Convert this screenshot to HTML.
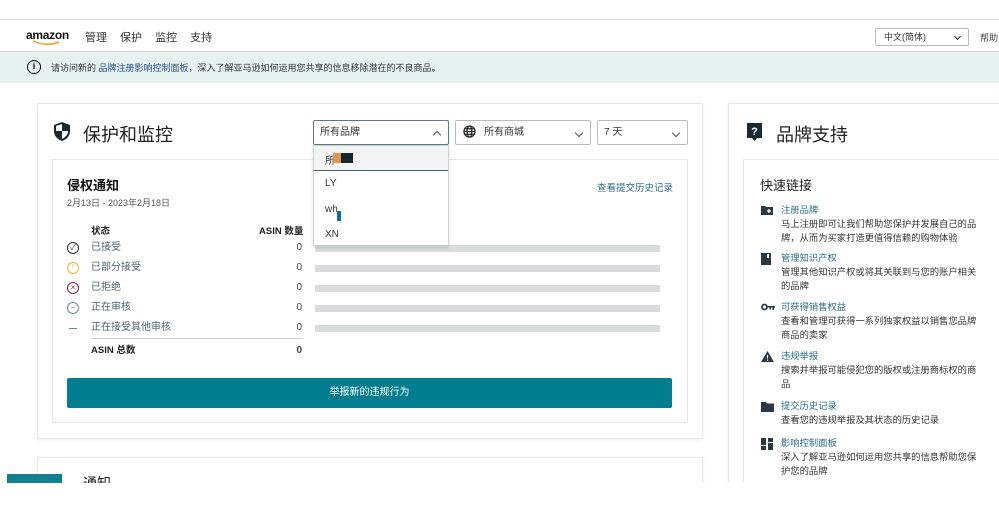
<!DOCTYPE html>
<html><head><meta charset="utf-8"><style>
*{margin:0;padding:0;box-sizing:border-box}
body{width:999px;height:500px;overflow:hidden;background:#fff;font-family:"Liberation Sans","Noto Sans CJK SC",sans-serif;color:#333;position:relative}
.a{position:absolute}
.card{position:absolute;background:#fff;border:1px solid #e7e9e9;box-shadow:0 1px 3px rgba(0,0,0,.08)}
.sel{position:absolute;height:25px;border:1px solid #b9bdbd;border-radius:2px;background:#fff;font-size:10px;color:#333;line-height:23px;padding-left:6px}
.chev{position:absolute;right:8px;top:9px;width:6px;height:6px;border-right:1.3px solid #555;border-bottom:1.3px solid #555;transform:rotate(45deg)}
.bar{position:absolute;left:315px;width:345px;height:7px;background:#d9dcdc}
.st{position:absolute;left:91px;font-size:10px;line-height:12px;color:#4a6470}
.num{position:absolute;left:290px;width:12px;text-align:right;font-size:10px;line-height:12px;color:#444}
.ic{position:absolute;left:67px;width:12px;height:12px;border-radius:50%;border:1.3px solid #333;font-size:8px;line-height:9px;text-align:center}
.ql{position:absolute;left:781px;font-size:9.3px;line-height:14px;color:#333;white-space:nowrap}
.ql b{font-weight:normal;color:#2d6b84}
.qi{position:absolute;left:761px}
</style></head><body>
<div class="a" style="left:0;top:19px;width:999px;height:1px;background:#dde0e0"></div>
<div class="a" style="left:26px;top:28px;font-size:12px;font-weight:bold;color:#111;letter-spacing:-0.3px">amazon</div>
<svg class="a" style="left:32px;top:40px" width="30" height="6"><path d="M1 1 Q14 7 27 2" stroke="#f29a1f" stroke-width="1.5" fill="none"/></svg>
<div class="a" style="left:85px;top:29px;font-size:11px;color:#333;word-spacing:10px">管理 保护 监控 支持</div>
<div class="sel" style="left:875px;top:28px;width:94px;height:18px;line-height:16px;font-size:9px;padding-left:8px">中文(简体)<div class="chev" style="top:5px;right:8px;width:5px;height:5px;border-color:#222"></div></div>
<div class="a" style="left:980px;top:31px;font-size:9px;color:#444">帮助</div>
<div class="a" style="left:0;top:51px;width:999px;height:1px;background:#d8dcdc"></div>
<div class="a" style="left:0;top:52px;width:999px;height:31px;background:#e6f2f2"></div>
<div class="a" style="left:27px;top:60px;width:14px;height:14px;border:1.4px solid #111;border-radius:50%;font-size:9px;font-weight:bold;text-align:center;line-height:11px;color:#111">i</div>
<div class="a" style="left:51px;top:61px;font-size:9px;color:#333">请访问新的 <span style="color:#2a4e8c">品牌注册影响控制面板</span>，深入了解亚马逊如何运用您共享的信息移除潜在的不良商品。</div>

<div class="card" style="left:37px;top:103px;width:666px;height:336px"></div>
<svg class="a" style="left:53px;top:121px" width="18" height="21" viewBox="0 0 18 21"><path d="M9 1 L17 4 V10 Q17 17 9 20 Q1 17 1 10 V4 Z" fill="#1a2a33"/><path d="M9 3 V10 H15 Q15 15 9 18 V10 H3 V5 Z" fill="#fff"/></svg>
<div class="a" style="left:83px;top:121px;font-size:18px;color:#222">保护和监控</div>
<div class="card" style="left:52px;top:159px;width:636px;height:264px;box-shadow:none"></div>
<div class="a" style="left:67px;top:175px;font-size:13px;font-weight:bold;color:#111">侵权通知</div>
<div class="a" style="left:67px;top:196px;font-size:9px;color:#555">2月13日 - 2023年2月18日</div>
<div class="a" style="left:597px;top:180px;font-size:9.5px;color:#2d6b84">查看提交历史记录</div>
<div class="a" style="left:91px;top:223px;font-size:9.5px;font-weight:bold;color:#222">状态</div>
<div class="a" style="left:259px;top:223px;font-size:9.5px;font-weight:bold;color:#222">ASIN 数量</div>
<div class="ic" style="top:242px;border-color:#333">✓</div>
<div class="ic" style="top:262px;border-color:#e9b432;color:#e9b432">!</div>
<div class="ic" style="top:282px;border-color:#8a1e3c;color:#8a1e3c">×</div>
<div class="ic" style="top:302px;border-color:#6a8a8a;color:#6a8a8a">−</div>
<div class="a" style="left:69px;top:328px;width:8px;height:1px;background:#6a8a8a"></div>
<div class="st" style="top:242px">已接受</div><div class="st" style="top:262px">已部分接受</div><div class="st" style="top:282px">已拒绝</div><div class="st" style="top:302px">正在审核</div><div class="st" style="top:322px">正在接受其他审核</div>
<div class="num" style="top:242px">0</div><div class="num" style="top:262px">0</div><div class="num" style="top:282px">0</div><div class="num" style="top:302px">0</div><div class="num" style="top:322px">0</div>
<div class="bar" style="top:245px"></div><div class="bar" style="top:265px"></div><div class="bar" style="top:285px"></div><div class="bar" style="top:305px"></div><div class="bar" style="top:325px"></div>
<div class="a" style="left:91px;top:338px;width:212px;height:1px;background:#ccc"></div>
<div class="a" style="left:91px;top:345px;font-size:9.5px;line-height:12px;font-weight:bold;color:#222">ASIN 总数</div>
<div class="num" style="top:345px;font-weight:bold">0</div>
<div class="a" style="left:67px;top:378px;width:605px;height:30px;background:#007e90;border-radius:2px;color:#fff;font-size:10px;text-align:center;line-height:30px">举报新的违规行为</div>

<div class="sel" style="left:313px;top:120px;width:136px;border-color:#5a7a80">所有品牌<div class="chev" style="transform:rotate(-135deg);top:11px"></div></div>
<div class="sel" style="left:455px;top:120px;width:136px;padding-left:28px">所有商城<div class="chev"></div></div>
<svg class="a" style="left:463px;top:125px" width="13" height="13" viewBox="0 0 14 14" fill="none" stroke="#222" stroke-width="1.3"><circle cx="7" cy="7" r="6"/><ellipse cx="7" cy="7" rx="2.5" ry="6"/><path d="M1 7H13M2 4H12M2 10H12"/></svg>
<div class="sel" style="left:597px;top:120px;width:91px">7 天<div class="chev"></div></div>
<div class="a" style="left:313px;top:145px;width:136px;height:101px;background:#fff;border:1px solid #cfd3d3;box-shadow:0 2px 3px rgba(0,0,0,.12)"></div>
<div class="a" style="left:314px;top:146px;width:134px;height:25px;background:#f3f5f5;border-bottom:1.5px solid #3d5f66"></div>
<div class="a" style="left:325px;top:152px;font-size:10px;color:#333">所</div>
<div class="a" style="left:333px;top:153px;width:8px;height:10px;background:#d99a4e"></div>
<div class="a" style="left:341px;top:153px;width:12px;height:10px;background:#15292b"></div>
<div class="a" style="left:325px;top:178px;font-size:10px;color:#333">LY</div>
<div class="a" style="left:325px;top:204px;font-size:10px;color:#333">wh</div>
<div class="a" style="left:337px;top:211px;width:4px;height:10px;background:#1b67a6"></div>
<div class="a" style="left:325px;top:229px;font-size:10px;color:#333">XN</div>

<div class="card" style="left:37px;top:457px;width:666px;height:60px"></div>
<div class="a" style="left:83px;top:473px;font-size:14px;color:#222;height:10px;overflow:hidden">通知</div>

<div class="card" style="left:728px;top:103px;width:275px;height:420px"></div>
<svg class="a" style="left:746px;top:122px" width="17" height="20" viewBox="0 0 17 20"><path d="M1 1H16V16H11L8.5 19L6 16H1Z" fill="#1a2a33"/><text x="8.5" y="13" font-size="11" font-weight="bold" fill="#fff" text-anchor="middle" font-family="Liberation Sans">?</text></svg>
<div class="a" style="left:776px;top:121px;font-size:18px;color:#222">品牌支持</div>
<div class="card" style="left:743px;top:159px;width:260px;height:360px;box-shadow:none"></div>
<div class="a" style="left:760px;top:175px;font-size:13px;color:#222">快速链接</div>
<svg class="qi" style="top:205px" width="12" height="10"><path d="M0 1H4L5 2H12V10H0Z" fill="#2a3a44"/><path d="M6 6H10M8 4V8" stroke="#fff" stroke-width="1.3"/></svg>
<div class="ql" style="top:203px"><b>注册品牌</b><br>马上注册即可让我们帮助您保护并发展自己的品<br>牌，从而为买家打造更值得信赖的购物体验</div>
<svg class="qi" style="top:253px" width="10" height="12"><rect width="10" height="12" fill="#2a3a44"/><rect x="6" y="1" width="2" height="4" fill="#fff"/></svg>
<div class="ql" style="top:251px"><b>管理知识产权</b><br>管理其他知识产权或将其关联到与您的账户相关<br>的品牌</div>
<svg class="qi" style="top:303px" width="14" height="8"><circle cx="3.5" cy="4" r="2.5" fill="none" stroke="#2a3a44" stroke-width="1.8"/><path d="M6 3H14V4.5H13V7H11.5V4.5H10V6.5H8.5V4.5H6Z" fill="#2a3a44"/></svg>
<div class="ql" style="top:300px"><b>可获得销售权益</b><br>查看和管理可获得一系列独家权益以销售您品牌<br>商品的卖家</div>
<svg class="qi" style="top:351px" width="13" height="11"><path d="M6.5 0L13 11H0Z" fill="#2a3a44"/><path d="M6.5 4V7.5M6.5 8.5V9.7" stroke="#fff" stroke-width="1.2"/></svg>
<div class="ql" style="top:349px"><b>违规举报</b><br>搜索并举报可能侵犯您的版权或注册商标权的商<br>品</div>
<svg class="qi" style="top:402px" width="13" height="10"><path d="M0 0H5L6 1.5H13V10H0Z" fill="#2a3a44"/></svg>
<div class="ql" style="top:399px"><b>提交历史记录</b><br>查看您的违规举报及其状态的历史记录</div>
<svg class="qi" style="top:438px" width="12" height="12"><rect width="5" height="7" fill="#2a3a44"/><rect y="8" width="5" height="4" fill="#2a3a44"/><rect x="7" width="5" height="4" fill="#2a3a44"/><rect x="7" y="5" width="5" height="7" fill="#2a3a44"/></svg>
<div class="ql" style="top:436px"><b>影响控制面板</b><br>深入了解亚马逊如何运用您共享的信息帮助您保<br>护您的品牌</div>

<div class="a" style="left:0;top:483px;width:999px;height:40px;background:#fff;z-index:10"></div>
<div class="a" style="left:7px;top:474px;width:55px;height:9px;background:#13808f;z-index:11"></div>
</body></html>
